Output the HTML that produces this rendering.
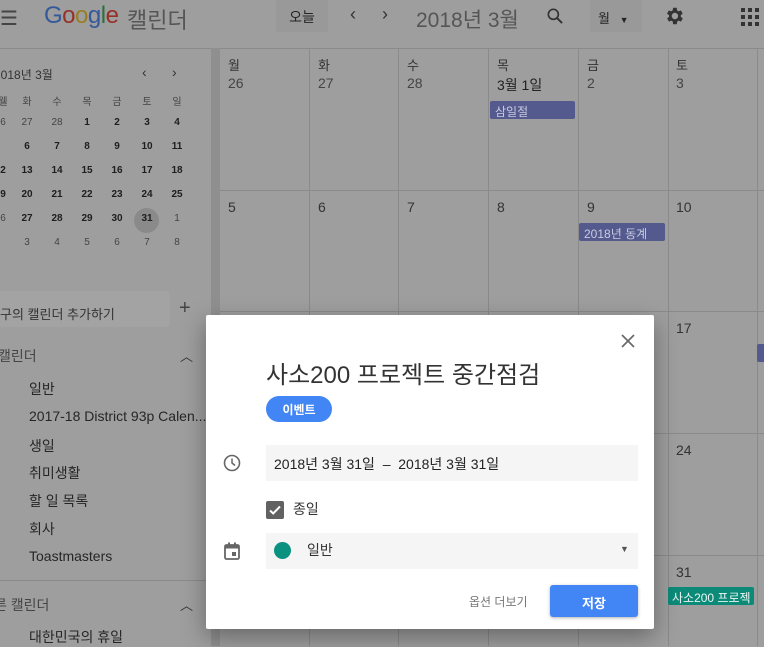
<!DOCTYPE html>
<html><head><meta charset="utf-8"><style>
*{box-sizing:border-box;margin:0;padding:0}
body{width:764px;height:646px;overflow:hidden;background:#9e9e9e;font-family:"Liberation Sans","Noto Sans CJK KR",sans-serif;color:#242424;position:relative}
.a{position:absolute;white-space:nowrap}
.vl{position:absolute;top:48px;bottom:0;width:1px;background:#8a8a8a}
.hl{position:absolute;left:220px;right:0;height:1px;background:#8a8a8a}
.mini{font-size:10px;color:#1e1e1e;text-align:center;width:30px}
.ev{position:absolute;height:18px;font-size:12px;color:#c8cbe0;background:#545a8e;border-radius:2px;padding:2px 5px;overflow:hidden}
.sb{font-size:14px;color:#262626}
</style></head><body>
<!-- top bar -->
<div class="a" style="left:0;top:6px;font-size:20px;color:#444">☰</div>
<div class="a" style="left:44px;top:2px;font-size:24px;font-family:'Liberation Sans',sans-serif;letter-spacing:-0.5px"><span style="color:#34589a">G</span><span style="color:#963127">o</span><span style="color:#9a7e22">o</span><span style="color:#34589a">g</span><span style="color:#2b6f3f">l</span><span style="color:#963127">e</span></div>
<div class="a" style="left:127px;top:3px;font-size:22px;color:#555">캘린더</div>
<div class="a" style="left:276px;top:0;width:52px;height:32px;background:#999;font-size:14px;padding-top:7px;text-align:center">오늘</div>
<div class="a" style="left:350px;top:4px;font-size:18px;color:#333">‹</div>
<div class="a" style="left:382px;top:4px;font-size:18px;color:#333">›</div>
<div class="a" style="left:416px;top:4px;font-size:21px;color:#555">2018년 3월</div>
<svg class="a" style="left:545px;top:6px" width="20" height="20" viewBox="0 0 24 24"><circle cx="10" cy="10" r="6" fill="none" stroke="#333" stroke-width="2"/><path d="M14.5 14.5l6 6" stroke="#333" stroke-width="2.4"/></svg>
<div class="a" style="left:590px;top:0;width:52px;height:32px;background:#999;font-size:13px;padding:8px 0 0 8px">월 <span style="font-size:9px;margin-left:6px">▼</span></div>
<svg class="a" style="left:663px;top:5px" width="22" height="22" viewBox="0 0 24 24"><path fill="#333" d="M19.4 13a7.5 7.5 0 000-2l2.1-1.6-2-3.5-2.5 1a7 7 0 00-1.7-1L15 3h-4l-.4 2.9a7 7 0 00-1.7 1l-2.5-1-2 3.5L6.6 11a7.5 7.5 0 000 2l-2.1 1.6 2 3.5 2.5-1a7 7 0 001.7 1L11 21h4l.4-2.9a7 7 0 001.7-1l2.5 1 2-3.5zM13 15.5a3.5 3.5 0 110-7 3.5 3.5 0 010 7z"/></svg>
<svg class="a" style="left:741px;top:8px" width="18" height="18" viewBox="0 0 18 18" fill="#333"><rect x="0" y="0" width="4" height="4"/><rect x="7" y="0" width="4" height="4"/><rect x="14" y="0" width="4" height="4"/><rect x="0" y="7" width="4" height="4"/><rect x="7" y="7" width="4" height="4"/><rect x="14" y="7" width="4" height="4"/><rect x="0" y="14" width="4" height="4"/><rect x="7" y="14" width="4" height="4"/><rect x="14" y="14" width="4" height="4"/></svg>
<div class="a" style="left:0;top:48px;width:764px;height:1px;background:#8a8a8a"></div>
<!-- sidebar scrollbar -->
<div class="a" style="left:211px;top:48px;width:9px;height:598px;background:#8f8f8f"></div>
<!-- mini cal -->
<div class="a" style="left:-6px;top:66px;font-size:12px;color:#333">2018년 3월</div>
<div class="a" style="left:142px;top:64px;font-size:14px;color:#333">‹</div>
<div class="a" style="left:172px;top:64px;font-size:14px;color:#333">›</div>
<div class="a" style="left:134px;top:208px;width:25px;height:25px;border-radius:50%;background:#8a8a8a"></div>
<div id="mini"></div>
<div class="a" style="left:0;top:291px;width:170px;height:36px;background:#a3a3a3;border-radius:0 4px 4px 0"></div>
<div class="a sb" style="left:0;top:304px;font-size:13px;color:#333">구의 캘린더 추가하기</div>
<div class="a" style="left:179px;top:297px;font-size:20px;color:#444">+</div>
<div class="a sb" style="left:-2px;top:346px;color:#444">캘린더</div>
<div class="a" style="left:180px;top:346px;font-size:13px;color:#333">︿</div>
<div class="a sb" style="left:29px;top:379px">일반</div>
<div class="a sb" style="left:29px;top:408px">2017-18 District 93p Calen...</div>
<div class="a sb" style="left:29px;top:436px">생일</div>
<div class="a sb" style="left:29px;top:463px">취미생활</div>
<div class="a sb" style="left:29px;top:491px">할 일 목록</div>
<div class="a sb" style="left:29px;top:519px">회사</div>
<div class="a sb" style="left:29px;top:548px">Toastmasters</div>
<div class="a" style="left:0;top:580px;width:210px;height:1px;background:#8a8a8a"></div>
<div class="a sb" style="left:-6px;top:595px;color:#444">른 캘린더</div>
<div class="a" style="left:180px;top:595px;font-size:13px;color:#333">︿</div>
<div class="a sb" style="left:29px;top:627px">대한민국의 휴일</div>
<!-- grid -->
<div class="vl" style="left:309px"></div><div class="vl" style="left:398px"></div><div class="vl" style="left:488px"></div><div class="vl" style="left:578px"></div><div class="vl" style="left:668px"></div><div class="vl" style="left:757px"></div>
<div class="hl" style="top:190px"></div><div class="hl" style="top:311px"></div><div class="hl" style="top:433px"></div><div class="hl" style="top:555px"></div>
<div id="grid"></div>
<div class="ev" style="left:490px;top:101px;width:85px">삼일절</div>
<div class="ev" style="left:579px;top:223px;width:86px">2018년 동계 ᅲ</div>
<div class="ev" style="left:757px;top:344px;width:10px"></div>
<div class="a" style="left:668px;top:587px;width:86px;height:18px;background:#0c8a78;color:#eaf6f3;font-size:12px;padding:2px 4px;border-radius:2px;overflow:hidden">사소200 프로젝</div>
<!-- dialog -->
<div class="a" style="left:206px;top:315px;width:448px;height:314px;background:#fff;border-radius:2px;box-shadow:0 8px 24px rgba(0,0,0,.35)">
<svg class="a" style="left:415px;top:19px" width="14" height="14" viewBox="0 0 14 14"><path d="M1 1l12 12M13 1L1 13" stroke="#666" stroke-width="1.6"/></svg>
<div class="a" style="left:60px;top:40px;font-size:24px;color:#333">사소200 프로젝트 중간점검</div>
<div class="a" style="left:60px;top:81px;width:66px;height:26px;border-radius:13px;background:#4285f4;color:#fff;font-size:12px;font-weight:bold;text-align:center;padding-top:5px">이벤트</div>
<svg class="a" style="left:17px;top:139px" width="18" height="18" viewBox="0 0 18 18"><circle cx="9" cy="9" r="7.5" fill="none" stroke="#666" stroke-width="1.6"/><path d="M9 4.5V9l3 2.5" fill="none" stroke="#666" stroke-width="1.5"/></svg>
<div class="a" style="left:60px;top:130px;width:372px;height:36px;background:#f5f5f5;font-size:14px;padding:9px 0 0 8px;color:#222">2018년 3월 31일 &nbsp;– &nbsp;2018년 3월 31일</div>
<div class="a" style="left:60px;top:186px;width:18px;height:18px;background:#616161;border-radius:2px"><svg width="18" height="18" viewBox="0 0 18 18"><path d="M4 9.5l3.2 3L14 5.5" fill="none" stroke="#fff" stroke-width="2"/></svg></div>
<div class="a" style="left:87px;top:184px;font-size:14px;color:#333">종일</div>
<svg class="a" style="left:18px;top:227px" width="16" height="18" viewBox="0 0 16 18"><rect x="1" y="3" width="14" height="14" rx="1.5" fill="none" stroke="#666" stroke-width="1.8"/><rect x="1" y="3" width="14" height="3.5" fill="#666"/><rect x="4" y="0.5" width="2" height="3" fill="#666"/><rect x="10" y="0.5" width="2" height="3" fill="#666"/><rect x="8" y="10" width="4" height="4" fill="#666"/></svg>
<div class="a" style="left:60px;top:218px;width:372px;height:36px;background:#f5f5f5"></div>
<div class="a" style="left:68px;top:227px;width:17px;height:17px;border-radius:50%;background:#0b9180"></div>
<div class="a" style="left:101px;top:225px;font-size:14px;color:#333">일반</div>
<div class="a" style="left:414px;top:229px;font-size:9px;color:#555">▼</div>
<div class="a" style="left:263px;top:278px;font-size:12px;color:#777">옵션 더보기</div>
<div class="a" style="left:344px;top:270px;width:88px;height:32px;background:#4285f4;border-radius:3px;color:#fff;font-size:13px;font-weight:bold;text-align:center;padding-top:8px;box-shadow:0 1px 3px rgba(0,0,0,.3)">저장</div>
</div>
<script>
var m=[["웰","화","수","목","금","토","일"],["6","27","28","1","2","3","4"],["","6","7","8","9","10","11"],["2","13","14","15","16","17","18"],["9","20","21","22","23","24","25"],["6","27","28","29","30","31","1"],["","3","4","5","6","7","8"]];
var xs=[-12,12,42,72,102,132,162],ys=[93,117,141,165,189,213,237],h="";
var grey={"1_1":1,"1_2":1,"5_6":1,"6_1":1,"6_2":1,"6_3":1,"6_4":1,"6_5":1,"6_6":1,"1_0":1,"5_0":1};
for(var r=0;r<7;r++)for(var c=0;c<7;c++){h+='<div class="a mini" style="left:'+xs[c]+'px;top:'+ys[r]+'px;'+(r==0||grey[r+"_"+c]?'color:#444':'font-weight:bold')+'">'+m[r][c]+'</div>';}
document.getElementById("mini").innerHTML=h;
var g="",cx=[228,318,407,497,587,676],wd=["월","화","수","목","금","토"],d1=["26","27","28","3월 1일","2","3"],rows=[[199,"5","6","7","8","9","10"],[320,"","","","","","17"],[442,"","","","","","24"],[564,"","","","","","31"]];
for(var i=0;i<6;i++){g+='<div class="a" style="left:'+cx[i]+'px;top:55px;font-size:13px;color:#333">'+wd[i]+'</div><div class="a" style="left:'+cx[i]+'px;top:75px;font-size:14px;color:'+(i==3?'#222':'#444')+'">'+d1[i]+'</div>';}
rows.forEach(function(r){for(var i=0;i<6;i++)if(r[i+1])g+='<div class="a" style="left:'+cx[i]+'px;top:'+r[0]+'px;font-size:14px;color:#333">'+r[i+1]+'</div>';});
document.getElementById("grid").innerHTML=g;
</script>
</body></html>
